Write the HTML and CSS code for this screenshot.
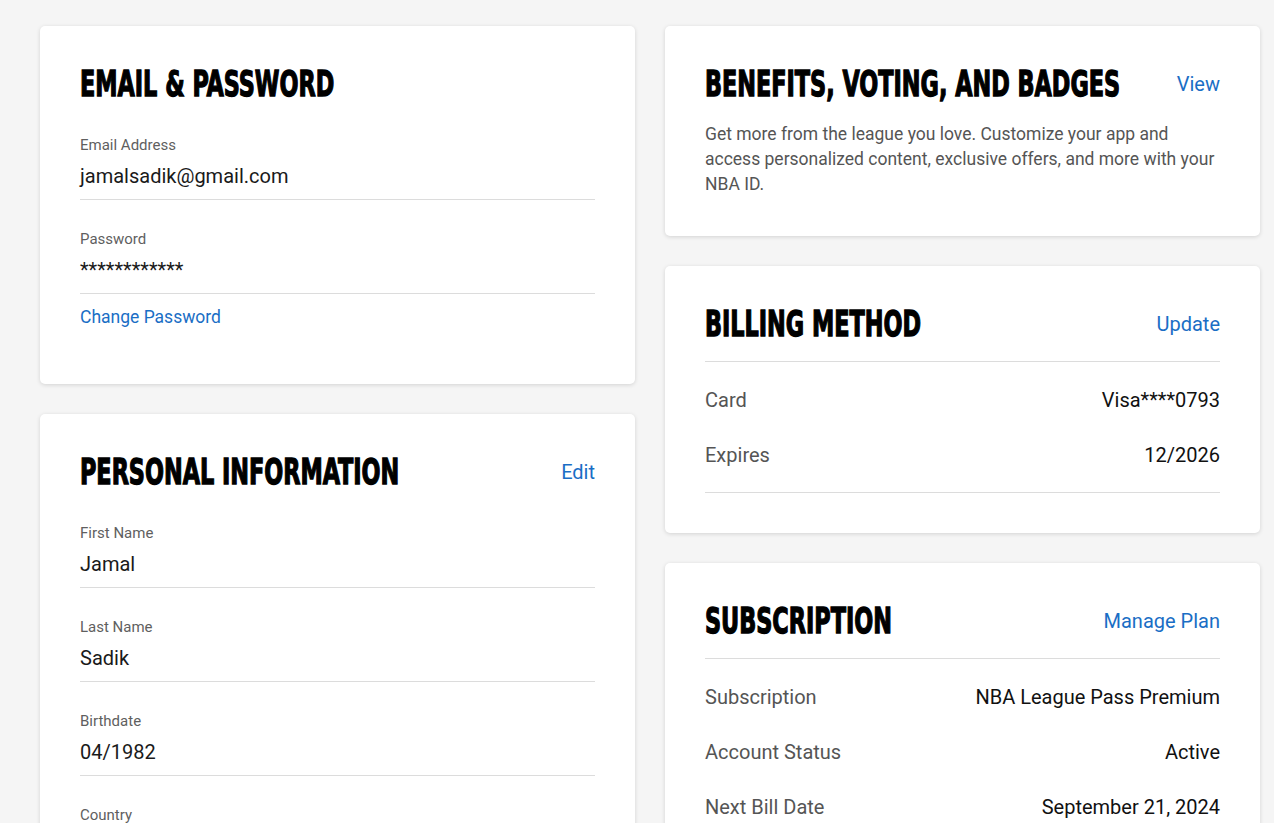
FILE: index.html
```html
<!DOCTYPE html>
<html lang="en">
<head>
    <meta charset="UTF-8">
    <meta name="viewport" content="width=device-width, initial-scale=1.0">
    <title>Account</title>
    <link rel="stylesheet" href="styles.css">
</head>
<body>
    <div class="account">
        <div class="column">
            <div class="card">
                <div class="card-head">
                    <h2>Email &amp; Password</h2>
                </div>
                <div class="field">
                    <div class="field-label">Email Address</div>
                    <div class="field-value">jamalsadik@gmail.com</div>
                </div>
                <div class="field">
                    <div class="field-label">Password</div>
                    <div class="field-value">************</div>
                </div>
                <div class="field-action">
                    <a href="#" class="link link-small">Change Password</a>
                </div>
            </div>

            <div class="card">
                <div class="card-head">
                    <h2>Personal Information</h2>
                    <a href="#" class="link">Edit</a>
                </div>
                <div class="field">
                    <div class="field-label">First Name</div>
                    <div class="field-value">Jamal</div>
                </div>
                <div class="field">
                    <div class="field-label">Last Name</div>
                    <div class="field-value">Sadik</div>
                </div>
                <div class="field">
                    <div class="field-label">Birthdate</div>
                    <div class="field-value">04/1982</div>
                </div>
                <div class="field">
                    <div class="field-label">Country</div>
                    <div class="field-value">United States</div>
                </div>
            </div>
        </div>

        <div class="column">
            <div class="card">
                <div class="card-head">
                    <h2>Benefits, Voting, and Badges</h2>
                    <a href="#" class="link">View</a>
                </div>
                <p class="card-text">Get more from the league you love. Customize your app and access personalized content, exclusive offers, and more with your NBA ID.</p>
            </div>

            <div class="card">
                <div class="card-head ruled">
                    <h2>Billing Method</h2>
                    <a href="#" class="link">Update</a>
                </div>
                <div class="rows">
                    <div class="row"><span class="row-label">Card</span><span class="row-value">Visa****0793</span></div>
                    <div class="row"><span class="row-label">Expires</span><span class="row-value">12/2026</span></div>
                </div>
            </div>

            <div class="card">
                <div class="card-head ruled">
                    <h2>Subscription</h2>
                    <a href="#" class="link">Manage Plan</a>
                </div>
                <div class="rows">
                    <div class="row"><span class="row-label">Subscription</span><span class="row-value">NBA League Pass Premium</span></div>
                    <div class="row"><span class="row-label">Account Status</span><span class="row-value">Active</span></div>
                    <div class="row"><span class="row-label">Next Bill Date</span><span class="row-value">September 21, 2024</span></div>
                </div>
            </div>
        </div>
    </div>
</body>
</html>
```

FILE: styles.css
```css
body {
    margin: 0;
    background-color: #f5f5f5;
    font-family: Roboto, "Liberation Sans", sans-serif;
    color: #111;
}
.account {
    display: grid;
    grid-template-columns: 595px 595px;
    gap: 30px;
    padding: 26px 14px 40px 40px;
    align-items: start;
}
.column {
    display: flex;
    flex-direction: column;
    gap: 30px;
}
.card {
    background-color: white;
    border-radius: 5px;
    box-shadow: 0 1px 4px rgba(0, 0, 0, 0.14);
    padding: 38px 40px 40px;
}
.card-head {
    display: flex;
    align-items: center;
    justify-content: space-between;
    margin-bottom: 2px;
}
.card-head.ruled {
    margin-bottom: 0;
    padding-bottom: 17px;
    border-bottom: 1px solid #dcdcdc;
}
h2 {
    flex: 1;
    min-width: 0;
    margin: 0;
    font-family: "DejaVu Sans Condensed", "DejaVu Sans", sans-serif;
    font-weight: 700;
    font-size: 36px;
    line-height: 40px;
    text-transform: uppercase;
    white-space: nowrap;
    color: #000;
    -webkit-text-stroke: 1.3px #000; /* heavier stems after the squeeze */
    transform: scaleX(0.69);
    transform-origin: left center;
}
.link {
    font-size: 20px;
    line-height: 28px;
    color: #1a6ec5;
    text-decoration: none;
    white-space: nowrap;
}
.link-small {
    font-size: 17.5px;
    line-height: 24px;
}
.field {
    padding: 29px 0 9px;
    border-bottom: 1px solid #dcdcdc;
}
.field-label {
    font-size: 15px;
    line-height: 20px;
    color: #5f5f5f;
}
.field-value {
    margin-top: 7px;
    font-size: 20px;
    line-height: 28px;
    color: #1a1a1a;
}
.field-action {
    margin-top: 11px;
    margin-bottom: 15px;
}
.card-text {
    margin: 18px 0 -1px;
    font-size: 17.5px;
    line-height: 25px;
    color: #555;
}
.rows {
    padding: 10px 0;
    border-bottom: 1px solid #dcdcdc;
}
.row {
    display: flex;
    justify-content: space-between;
    padding: 13.5px 0;
    font-size: 20px;
    line-height: 28px;
}
.row-label {
    color: #555;
}
.row-value {
    color: #111;
}
```
